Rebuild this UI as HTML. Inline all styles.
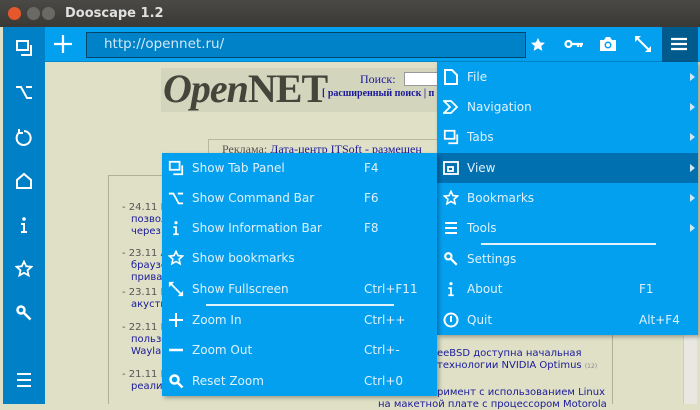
<!DOCTYPE html>
<html><head><meta charset="utf-8"><style>
*{margin:0;padding:0;box-sizing:border-box}
body{width:700px;height:404px;overflow:hidden;position:relative;background:#dfe0c6;font-family:"Liberation Sans","DejaVu Sans",sans-serif}
.title{position:absolute;left:0;top:0;width:700px;height:27px;background:linear-gradient(#4a4945,#3a3935);color:#e0e0e0;font-family:"DejaVu Sans",sans-serif;font-weight:bold;font-size:13px}
.title span{position:absolute;left:65px;top:6px}
.btn{position:absolute;top:7px;width:13px;height:13px;border-radius:50%}
.side{position:absolute;left:3px;top:27px;width:42px;height:377px;background:#0080c6}
.side svg{position:absolute;left:12px}
.tb{position:absolute;left:45px;top:27px;width:655px;height:35px;background:#03a0f0;border-bottom:1px solid #0588c8}
.url{position:absolute;left:86px;top:32px;width:440px;height:26px;background:#0082c8;border:1px solid #02456a;color:#cfe8f8;font-family:"DejaVu Sans",sans-serif;font-size:13.5px;padding:3px 0 0 17px}
.ham{position:absolute;left:662px;top:27px;width:36px;height:35px;background:#005a8c}
.menu{position:absolute;background:#03a0f0;color:#dff1fc;font-family:"DejaVu Sans",sans-serif;font-size:12px;box-shadow:2px 2px 4px rgba(0,0,0,.3)}
.row{position:absolute;left:0;height:30px;width:100%}
.row .t{position:absolute;left:30px;top:8px}
.row .k{position:absolute;top:8px}
.row svg{position:absolute;left:6px;top:7px}
.arr{position:absolute;right:3px;top:11px;width:0;height:0;border-left:5px solid #cfe8f8;border-top:4px solid transparent;border-bottom:4px solid transparent}
.sep{position:absolute;height:2px;background:#e0f2fc}
.pg{position:absolute;font-family:"DejaVu Sans",sans-serif;font-size:10px;color:#1a1a9a}
</style></head><body>
<div class="title"><div class="btn" style="left:8px;background:#e4582b"></div><div class="btn" style="left:27px;background:#6a6964"></div><div class="btn" style="left:42px;background:#6a6964"></div><span>Dooscape 1.2</span></div>

<div style="position:absolute;left:45px;top:62px;width:655px;height:342px;background:#dfe0c6"></div>
<div style="position:absolute;left:161px;top:68px;width:276px;height:44px;background:#d4d5bd"></div>
<div style="position:absolute;left:163px;top:65px;font-family:'Liberation Serif',serif;font-style:italic;font-weight:bold;font-size:40px;color:#45453c;letter-spacing:-1px">Open<span style="font-style:normal">NET</span></div>
<div style="position:absolute;left:360px;top:72px;font-family:'Liberation Serif',serif;font-size:12px;color:#1a1a9a">Поиск:</div>
<div style="position:absolute;left:404px;top:72px;width:34px;height:14px;background:#fff;border:1px solid #999"></div>
<div style="position:absolute;left:322px;top:88px;font-family:'Liberation Serif',serif;font-size:10px;color:#1a1a9a;font-weight:bold">[ расширенный поиск | п</div>
<div style="position:absolute;left:208px;top:139px;width:240px;height:20px;border:1px solid #b8b8a0"></div>
<div style="position:absolute;left:222px;top:142px;font-family:'Liberation Serif',serif;font-size:12px;color:#555">Реклама: <span style="color:#1a1a9a">Дата-центр ITSoft - размещен</span></div>
<div style="position:absolute;left:108px;top:175px;width:505px;height:229px;border-left:1px solid #b0b098;border-top:1px solid #b0b098"></div>
<div style="position:absolute;left:612px;top:335px;width:1px;height:69px;background:#b0b098"></div>
<div style="position:absolute;left:683px;top:335px;width:14px;height:69px;background:#e8e8e0;border-left:1px solid #ccc"></div>
<div class="pg" style="left:122px;top:202px;color:#555">- 24.11 В</div>
<div class="pg" style="left:131px;top:214px">позвол</div><div class="pg" style="left:131px;top:226px">через</div>
<div class="pg" style="left:122px;top:248px;color:#555">- 23.11 А</div>
<div class="pg" style="left:131px;top:260px">браузе</div><div class="pg" style="left:131px;top:272px">приват</div>
<div class="pg" style="left:122px;top:287px;color:#555">- 23.11 Г</div>
<div class="pg" style="left:131px;top:299px">акусти</div>
<div class="pg" style="left:122px;top:322px;color:#555">- 22.11 Г</div>
<div class="pg" style="left:131px;top:334px">пользо</div><div class="pg" style="left:131px;top:346px">Waylar</div>
<div class="pg" style="left:122px;top:369px;color:#555">- 21.11 Г</div>
<div class="pg" style="left:131px;top:381px">реализ</div>
<div class="pg" style="left:437px;top:348px">eeBSD доступна начальная</div>
<div class="pg" style="left:437px;top:360px">технологии NVIDIA Optimus <span style="font-size:6px;color:#888">(12)</span></div>
<div class="pg" style="left:437px;top:387px">римент с использованием Linux</div>
<div class="pg" style="left:378px;top:399px">на макетной плате с процессором Motorola</div>

<div class="side">
<svg style="top:12px" width="18" height="18" viewBox="0 0 18 18" fill="none" stroke="#fff" stroke-width="2"><rect x="2" y="2" width="11" height="9"/><path d="M16 6v10H6"/></svg>
<svg style="top:56px" width="18" height="18" viewBox="0 0 18 18" fill="none" stroke="#fff" stroke-width="2"><path d="M1 4h5l6 11h5M11 4h6"/></svg>
<svg style="top:101px" width="18" height="18" viewBox="0 0 18 18" fill="none" stroke="#fff" stroke-width="2"><path d="M5 4a7 7 0 1 0 4-1M4 1v4h4"/></svg>
<svg style="top:145px" width="18" height="18" viewBox="0 0 18 18" fill="none" stroke="#fff" stroke-width="2"><path d="M2 16V8l7-6 7 6v8z"/></svg>
<svg style="top:189px" width="18" height="18" viewBox="0 0 18 18" fill="#fff"><circle cx="9" cy="3" r="1.8"/><path d="M6 7h4v8h2v2H6v-2h2V9H6z"/></svg>
<svg style="top:233px" width="18" height="18" viewBox="0 0 18 18" fill="none" stroke="#fff" stroke-width="1.8"><path d="M9 1.5l2.2 4.8 5.2.5-3.9 3.5 1.1 5.2L9 12.8l-4.6 2.7 1.1-5.2L1.6 6.8l5.2-.5z"/></svg>
<svg style="top:277px" width="18" height="18" viewBox="0 0 18 18" fill="none" stroke="#fff" stroke-width="2.5"><circle cx="6" cy="6" r="3.5"/><path d="M8.5 8.5l7 7"/></svg>
<svg style="top:344px" width="18" height="18" viewBox="0 0 18 18" fill="none" stroke="#fff" stroke-width="2"><path d="M2 3h14M2 9h14M2 15h14"/></svg>
</div>

<div class="tb"></div>
<svg style="position:absolute;left:53px;top:34px" width="20" height="20" viewBox="0 0 20 20" stroke="#fff" stroke-width="2.2"><path d="M10 1v18M1 10h18"/></svg>
<div class="url">http://opennet.ru/</div>
<svg style="position:absolute;left:530px;top:37px" width="16" height="16" viewBox="0 0 18 18" fill="#fff"><path d="M9 1l2.3 5 5.5.5-4.1 3.7 1.2 5.4L9 12.8l-4.9 2.8 1.2-5.4L1.2 6.5l5.5-.5z"/></svg>
<svg style="position:absolute;left:564px;top:38px" width="20" height="12" viewBox="0 0 20 12" fill="none" stroke="#fff" stroke-width="2.2"><circle cx="4.5" cy="6" r="3"/><path d="M7.5 6H19M14 6v3M17 6v3"/></svg>
<svg style="position:absolute;left:599px;top:36px" width="18" height="16" viewBox="0 0 18 16" fill="#fff"><path d="M1 4h4l2-3h4l2 3h4v11H1z"/><circle cx="9" cy="9" r="3.5" fill="#03a0f0"/><circle cx="9" cy="9" r="2" fill="#fff"/></svg>
<svg style="position:absolute;left:634px;top:35px" width="18" height="18" viewBox="0 0 18 18" fill="#fff" stroke="#fff" stroke-width="2"><path d="M4 4l10 10"/><path d="M1 1h6L1 7z M17 17h-6l6-6z" stroke-width="0"/></svg>
<div class="ham"></div>
<svg style="position:absolute;left:671px;top:37px" width="16" height="14" viewBox="0 0 16 14" stroke="#fff" stroke-width="2.2"><path d="M0 2h16M0 7h16M0 12h16"/></svg>

<div class="menu" style="left:437px;top:62px;width:261px;height:273px">
<div class="row" style="top:0"><svg width="16" height="16" viewBox="0 0 16 16" fill="none" stroke="#fff" stroke-width="2"><path d="M2 1h7l5 5v9H2z"/></svg><span class="t">File</span><i class="arr"></i></div>
<div class="row" style="top:30px"><svg width="16" height="16" viewBox="0 0 16 16" fill="none" stroke="#fff" stroke-width="1.8"><path d="M1 2h7l6 6-6 6H1l6-6z"/></svg><span class="t">Navigation</span><i class="arr"></i></div>
<div class="row" style="top:60px"><svg width="16" height="16" viewBox="0 0 18 18" fill="none" stroke="#fff" stroke-width="2"><rect x="2" y="2" width="11" height="9"/><path d="M16 6v10H6"/></svg><span class="t">Tabs</span><i class="arr"></i></div>
<div class="row" style="top:91px;background:#0070b0"><svg width="16" height="16" viewBox="0 0 16 16" fill="none" stroke="#fff" stroke-width="1.8"><rect x="1" y="2" width="14" height="12"/><rect x="5" y="7" width="5" height="4"/></svg><span class="t">View</span><i class="arr"></i></div>
<div class="row" style="top:121px"><svg width="16" height="16" viewBox="0 0 18 18" fill="none" stroke="#fff" stroke-width="1.8"><path d="M9 1.5l2.2 4.8 5.2.5-3.9 3.5 1.1 5.2L9 12.8l-4.6 2.7 1.1-5.2L1.6 6.8l5.2-.5z"/></svg><span class="t">Bookmarks</span><i class="arr"></i></div>
<div class="row" style="top:151px"><svg width="16" height="16" viewBox="0 0 16 16" stroke="#fff" stroke-width="2"><path d="M2 3h12M2 8h12M2 13h12"/></svg><span class="t">Tools</span><i class="arr"></i></div>
<div class="sep" style="left:44px;top:181px;width:175px"></div>
<div class="row" style="top:182px"><svg width="16" height="16" viewBox="0 0 18 18" fill="none" stroke="#fff" stroke-width="2.5"><circle cx="6" cy="6" r="3.5"/><path d="M8.5 8.5l7 7"/></svg><span class="t">Settings</span></div>
<div class="row" style="top:212px"><svg width="16" height="16" viewBox="0 0 18 18" fill="#fff"><circle cx="9" cy="3" r="1.8"/><path d="M6 7h4v8h2v2H6v-2h2V9H6z"/></svg><span class="t">About</span><span class="k" style="left:202px">F1</span></div>
<div class="row" style="top:243px"><svg width="16" height="16" viewBox="0 0 16 16" fill="none" stroke="#fff" stroke-width="2"><circle cx="8" cy="8" r="6.5"/><path d="M8 4v6"/></svg><span class="t">Quit</span><span class="k" style="left:202px">Alt+F4</span></div>
</div>

<div class="menu" style="left:162px;top:153px;width:275px;height:243px">
<div class="row" style="top:0"><svg width="16" height="16" viewBox="0 0 18 18" fill="none" stroke="#fff" stroke-width="2"><rect x="2" y="2" width="11" height="9"/><path d="M16 6v10H6"/></svg><span class="t">Show Tab Panel</span><span class="k" style="left:202px">F4</span></div>
<div class="row" style="top:30px"><svg width="16" height="16" viewBox="0 0 18 18" fill="none" stroke="#fff" stroke-width="2"><path d="M1 4h5l6 11h5M11 4h6"/></svg><span class="t">Show Command Bar</span><span class="k" style="left:202px">F6</span></div>
<div class="row" style="top:60px"><svg width="16" height="16" viewBox="0 0 18 18" fill="#fff"><circle cx="9" cy="3" r="1.8"/><path d="M6 7h4v8h2v2H6v-2h2V9H6z"/></svg><span class="t">Show Information Bar</span><span class="k" style="left:202px">F8</span></div>
<div class="row" style="top:90px"><svg width="16" height="16" viewBox="0 0 18 18" fill="none" stroke="#fff" stroke-width="1.8"><path d="M9 1.5l2.2 4.8 5.2.5-3.9 3.5 1.1 5.2L9 12.8l-4.6 2.7 1.1-5.2L1.6 6.8l5.2-.5z"/></svg><span class="t">Show bookmarks</span></div>
<div class="row" style="top:121px"><svg width="16" height="16" viewBox="0 0 18 18" fill="#fff" stroke="#fff" stroke-width="2"><path d="M4 4l10 10"/><path d="M1 1h6L1 7z M17 17h-6l6-6z" stroke-width="0"/></svg><span class="t">Show Fullscreen</span><span class="k" style="left:202px">Ctrl+F11</span></div>
<div class="sep" style="left:44px;top:151px;width:188px"></div>
<div class="row" style="top:152px"><svg width="16" height="16" viewBox="0 0 16 16" stroke="#fff" stroke-width="2"><path d="M8 1v14M1 8h14"/></svg><span class="t">Zoom In</span><span class="k" style="left:202px">Ctrl++</span></div>
<div class="row" style="top:182px"><svg width="16" height="16" viewBox="0 0 16 16" stroke="#fff" stroke-width="2.5"><path d="M1 8h14"/></svg><span class="t">Zoom Out</span><span class="k" style="left:202px">Ctrl+-</span></div>
<div class="row" style="top:213px"><svg width="16" height="16" viewBox="0 0 16 16" fill="none" stroke="#fff" stroke-width="2.5"><circle cx="6.5" cy="6.5" r="4"/><path d="M9.5 9.5l5 5"/></svg><span class="t">Reset Zoom</span><span class="k" style="left:202px">Ctrl+0</span></div>
</div>
</body></html>
